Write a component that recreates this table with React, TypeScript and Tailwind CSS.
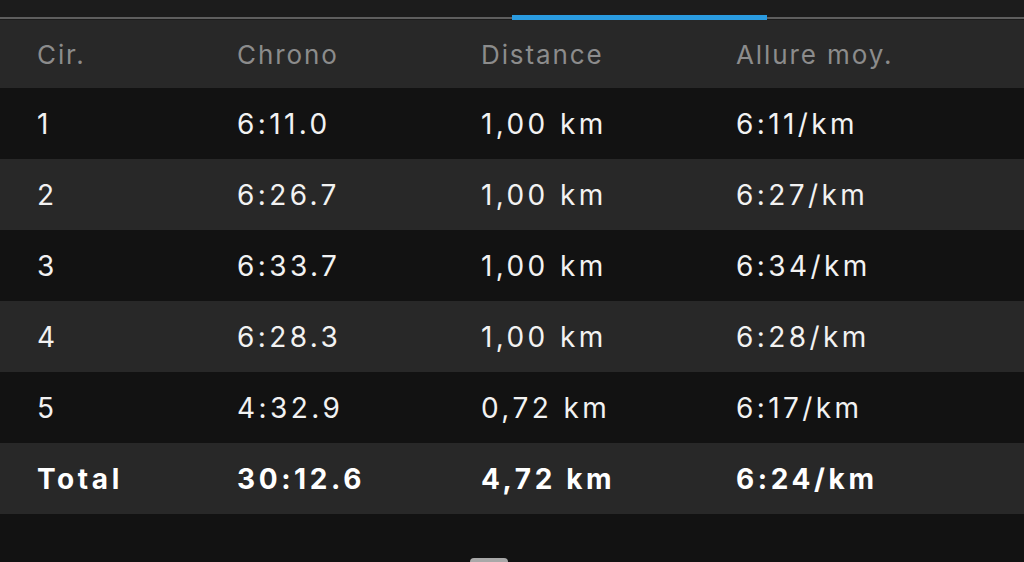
import React from "react";

const rows = [
  ["1", "6:11.0", "1,00 km", "6:11/km"],
  ["2", "6:26.7", "1,00 km", "6:27/km"],
  ["3", "6:33.7", "1,00 km", "6:34/km"],
  ["4", "6:28.3", "1,00 km", "6:28/km"],
  ["5", "4:32.9", "0,72 km", "6:17/km"],
];

const Row = ({ cells, className }: { cells: string[]; className: string }) => (
  <div className={`flex items-center h-[71px] ${className}`}>
    <div className="w-[237px] pl-[37px]">{cells[0]}</div>
    <div className="w-[244px]">{cells[1]}</div>
    <div className="w-[255px]">{cells[2]}</div>
    <div>{cells[3]}</div>
  </div>
);

export default function App() {
  return (
    <div
      className="w-[1024px] h-[562px] bg-[#121212] overflow-hidden flex flex-col"
      style={{ fontFamily: "Inter, 'Noto Sans', sans-serif" }}
    >
      <div className="h-[15px] bg-[#1c1c1c]" />
      <div className="relative h-[5px] bg-[#1c1c1c]">
        <div className="absolute left-0 right-0 bottom-[1px] h-[2px] bg-[#5e5e5e]" />
        <div className="absolute left-[512px] w-[255px] top-0 bottom-0 bg-[#2a9be0]" />
      </div>
      <div className="flex items-center h-[68px] bg-[#282828] text-[26px] tracking-[1.9px] text-[#8c8c8c]">
        <div className="w-[237px] pl-[37px]">Cir.</div>
        <div className="w-[244px]">Chrono</div>
        <div className="w-[255px]">Distance</div>
        <div>Allure moy.</div>
      </div>
      <div className="text-[28px] tracking-[3.4px] text-[#f2f2f2]">
        {rows.map((r, i) => (
          <Row key={r[0]} cells={r} className={i % 2 === 0 ? "bg-[#121212]" : "bg-[#282828]"} />
        ))}
        <Row
          cells={["Total", "30:12.6", "4,72 km", "6:24/km"]}
          className="bg-[#282828] font-bold tracking-[3.6px] text-white"
        />
      </div>
      <div className="relative flex-1">
        <div className="absolute left-[470px] bottom-[-4px] w-[38px] h-[8px] rounded-[4px] bg-[#a8a8a8]" />
      </div>
    </div>
  );
}
